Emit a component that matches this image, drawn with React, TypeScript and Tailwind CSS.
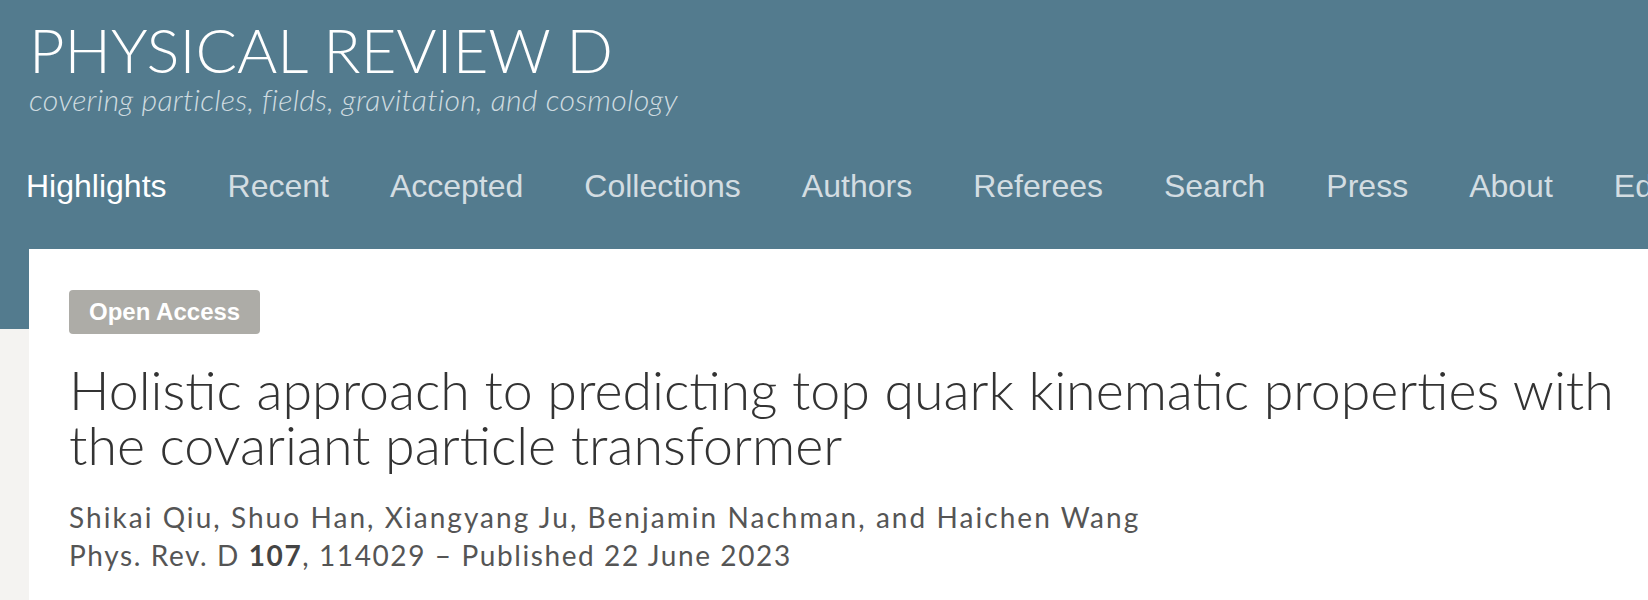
const navItems = [
  "Highlights",
  "Recent",
  "Accepted",
  "Collections",
  "Authors",
  "Referees",
  "Search",
  "Press",
  "About",
  "Editorial Team",
]

export default function App() {
  return (
    <div className="min-h-[600px] overflow-hidden bg-[#f4f3f1]">
      <header className="h-[329px] bg-[#537b8e]">
        <div className="pl-[29px] pt-[18px]">
          <h1 className="font-['Lato',sans-serif] text-[61.5px] font-light leading-[62px] text-white">
            PHYSICAL REVIEW D
          </h1>
          <p className="mt-[2px] font-['Lato',sans-serif] text-[30.3px] font-light italic leading-[34px] tracking-[0.25px] text-[#cfdbe0]">
            covering particles, fields, gravitation, and cosmology
          </p>
        </div>
        <nav className="mt-[50px] flex gap-[61px] overflow-hidden whitespace-nowrap pl-[26px] font-['Liberation_Sans',Arial,sans-serif] text-[32px] leading-[40px]">
          {navItems.map((item, i) => (
            <a
              key={item}
              href="#"
              className={i === 0 ? "text-white" : "text-[#d3dde2]"}
            >
              {item}
            </a>
          ))}
        </nav>
      </header>

      <main className="ml-[29px] -mt-[80px] min-h-[351px] bg-white pl-[40px] pt-[41px]">
        <span className="inline-block rounded-[4px] bg-[#adaca7] px-[20px] font-['Liberation_Sans',Arial,sans-serif] text-[24px] font-bold leading-[44px] text-white">
          Open Access
        </span>
        <h2 className="mt-[28px] font-['Lato',sans-serif] text-[53.7px] font-light leading-[55px] text-[#333333]">
          Holistic approach to predicting top quark kinematic properties with
          <br />
          the covariant particle transformer
        </h2>
        <div className="mt-[26px] font-['Lato',sans-serif] text-[28px] leading-[38px] text-[#555555]">
          <p className="tracking-[2.05px]">
            Shikai Qiu, Shuo Han, Xiangyang Ju, Benjamin Nachman, and Haichen Wang
          </p>
          <p className="tracking-[1.6px]">
            Phys. Rev. D <b className="font-bold text-[#444444]">107</b>, 114029 – Published 22 June 2023
          </p>
        </div>
      </main>
    </div>
  )
}
